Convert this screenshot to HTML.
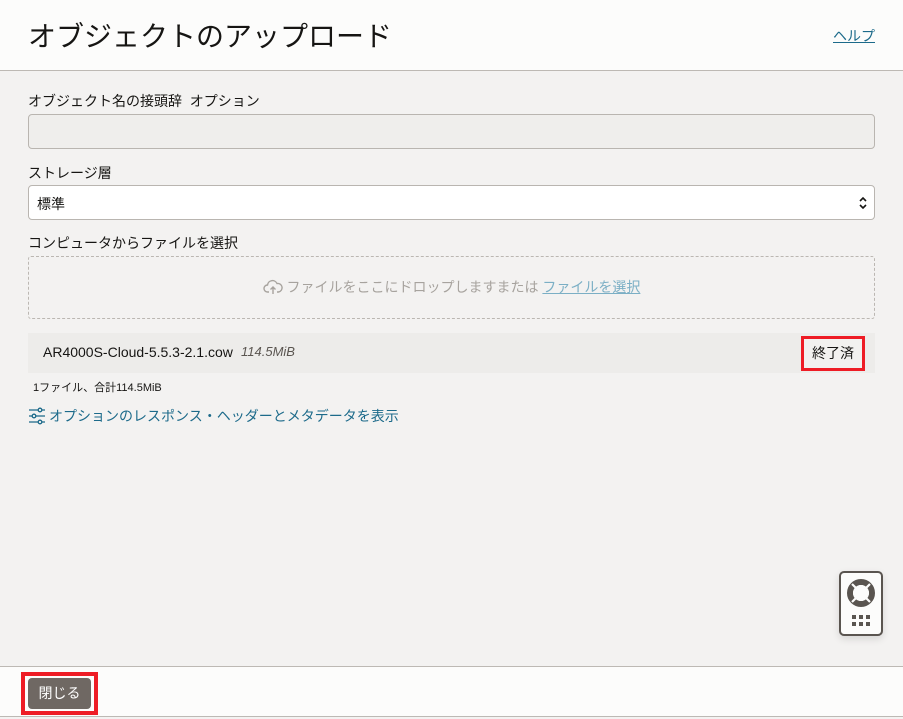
<!DOCTYPE html>
<html><head><meta charset="utf-8">
<style>
*{box-sizing:border-box;margin:0;padding:0}
body{width:903px;height:719px;overflow:hidden;background:#f3f2f1;font-family:"Liberation Sans","Noto Sans CJK JP",sans-serif;color:#161513;position:relative}
.hdr{position:absolute;left:0;top:0;width:903px;height:71px;background:#fcfcfb;border-bottom:1px solid #bdb9b4}
.title{position:absolute;left:28px;top:15px;font-size:28px;font-weight:400;color:#161513}
.help{position:absolute;left:833px;top:26px;font-size:14px;color:#1c6a8a;text-decoration:underline}
.lbl{position:absolute;left:28px;font-size:14px;color:#161513}
.inp{position:absolute;left:28px;width:847px;height:35px;border:1px solid #b9b5b0;border-radius:4px}
.drop{position:absolute;left:28px;top:256px;width:847px;height:63px;border:1px dashed #bbb7b2;border-radius:3px;text-align:center;line-height:61px;font-size:14px;color:#a7a39e}
.drop a{color:#7bafc5;text-decoration:underline}
.row{position:absolute;left:28px;top:333px;width:847px;height:40px;background:#edecea}
.foot{position:absolute;left:0;top:666px;width:903px;height:51px;background:#fcfcfb;border-top:1px solid #bdb9b4;border-bottom:1px solid #bdb9b4}
</style></head><body>
<div class="hdr"><div class="title">オブジェクトのアップロード</div><div class="help">ヘルプ</div></div>
<div class="lbl" style="top:91px">オブジェクト名の接頭辞&nbsp; オプション</div>
<div class="inp" style="top:114px;background:#efeeec"></div>
<div class="lbl" style="top:163px">ストレージ層</div>
<div class="inp" style="top:185px;background:#fff"><span style="position:absolute;left:8px;top:8px;font-size:14px">標準</span>
<svg style="position:absolute;right:6px;top:10px" width="10" height="14" viewBox="0 0 10 14"><path d="M2 5l3-3 3 3M2 9l3 3 3-3" fill="none" stroke="#161513" stroke-width="1.6"/></svg></div>
<div class="lbl" style="top:233px">コンピュータからファイルを選択</div>
<div class="drop"><svg width="20" height="16" viewBox="0 0 20 16" style="vertical-align:-3px"><path d="M6 13H4.5a3.5 3.5 0 0 1 0-7 5 5 0 0 1 9.5-1.5A4 4 0 0 1 15.5 13H14M10 15V8M7.5 10.5L10 8l2.5 2.5" fill="none" stroke="#a7a39e" stroke-width="1.4"/></svg> ファイルをここにドロップしますまたは <a>ファイルを選択</a></div>
<div class="row"><span style="position:absolute;left:15px;top:11px;font-size:14px;color:#161513">AR4000S-Cloud-5.5.3-2.1.cow</span><span style="position:absolute;left:213px;top:11px;font-size:13px;font-style:italic;color:#5a5550">114.5MiB</span></div>
<div style="position:absolute;left:801px;top:336px;width:64px;height:35px;border:3px solid #ee1c25;background:#f2f1ef;font-size:14px;text-align:center;line-height:29px">終了済</div>
<div style="position:absolute;left:33px;top:379px;font-size:11px;color:#161513">1ファイル、合計114.5MiB</div>
<div style="position:absolute;left:28px;top:406px;font-size:14px;color:#1c6a8a"><svg width="18" height="18" viewBox="0 0 18 18" style="vertical-align:-4px;margin-right:3px"><g fill="none" stroke="#1c6a8a" stroke-width="1.3"><path d="M1 3h9M14 3h3M1 9h3M8 9h9M1 15h9M14 15h3"/><circle cx="12" cy="3" r="1.8"/><circle cx="6" cy="9" r="1.8"/><circle cx="12" cy="15" r="1.8"/></g></svg>オプションのレスポンス・ヘッダーとメタデータを表示</div>
<div style="position:absolute;left:839px;top:571px;width:44px;height:65px;border:2px solid #5a5550;border-radius:5px;background:#fcfcfb;box-shadow:0 3px 8px rgba(0,0,0,.12)">
<svg width="40" height="61" viewBox="0 0 40 61"><circle cx="20" cy="20" r="11" fill="none" stroke="#5a5550" stroke-width="6"/><circle cx="20" cy="20" r="7.5" fill="none" stroke="#fcfcfb" stroke-width="1"/><g stroke="#fcfcfb" stroke-width="2.2"><path d="M11 11l5 5M29 11l-5 5M11 29l5-5M29 29l-5-5"/></g><g fill="#5a5550"><rect x="11" y="42" width="4" height="4"/><rect x="18" y="42" width="4" height="4"/><rect x="25" y="42" width="4" height="4"/><rect x="11" y="49" width="4" height="4"/><rect x="18" y="49" width="4" height="4"/><rect x="25" y="49" width="4" height="4"/></g></svg></div>
<div class="foot"></div>
<div style="position:absolute;left:21px;top:672px;width:77px;height:43px;border:4px solid #ee1c25;background:#fcfcfb"></div>
<div style="position:absolute;left:28px;top:678px;width:63px;height:31px;background:#6f6863;border-radius:4px;color:#fff;font-size:14px;text-align:center;line-height:31px">閉じる</div>
</body></html>
